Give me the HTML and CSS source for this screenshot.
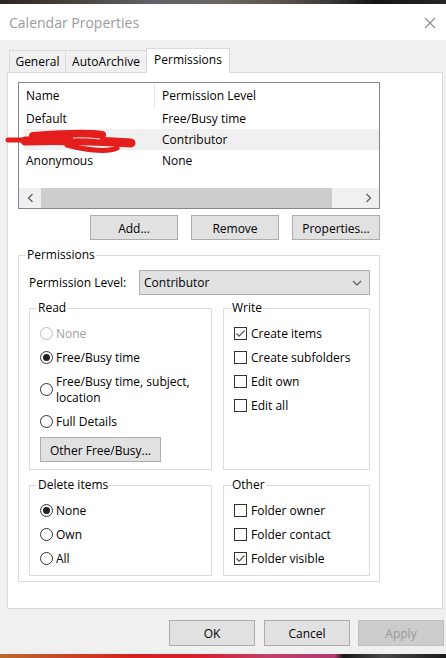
FILE: index.html
```html
<!DOCTYPE html>
<html lang="en">
  <head>
    <meta charset="utf-8" />
    <title>Calendar Properties</title>
    <link rel="stylesheet" href="styles.css">
  </head>
  <body>
    <div class="wall wall-top"></div>

    <div class="titlebar">
      <span class="title">Calendar Properties</span>
      <svg class="close" width="12" height="12" viewBox="0 0 12 12">
        <path d="M1 1 L11 11 M11 1 L1 11" stroke="#8a8a8a" stroke-width="1.1" fill="none"/>
      </svg>
    </div>

    <div class="dialog">
      <div class="tabs">
        <div class="tab tab-general">General</div>
        <div class="tab tab-archive">AutoArchive</div>
        <div class="tab tab-perms active">Permissions</div>
      </div>

      <div class="panel">
        <div class="list">
          <div class="list-head">
            <span class="col col-name">Name</span>
            <span class="col col-level">Permission Level</span>
          </div>
          <div class="list-row">
            <span class="col col-name">Default</span>
            <span class="col col-level">Free/Busy time</span>
          </div>
          <div class="list-row selected">
            <span class="col col-name"></span>
            <span class="col col-level">Contributor</span>
          </div>
          <div class="list-row">
            <span class="col col-name">Anonymous</span>
            <span class="col col-level">None</span>
          </div>
          <div class="list-fill"></div>
          <div class="hscroll">
            <span class="arrow">
              <svg width="7" height="10" viewBox="0 0 7 10"><path d="M5.5 1 L1.5 5 L5.5 9" stroke="#606060" stroke-width="1.3" fill="none"/></svg>
            </span>
            <span class="track"><span class="thumb"></span></span>
            <span class="arrow">
              <svg width="7" height="10" viewBox="0 0 7 10"><path d="M1.5 1 L5.5 5 L1.5 9" stroke="#606060" stroke-width="1.3" fill="none"/></svg>
            </span>
          </div>

          <!-- redaction scribble drawn over the user name -->
          <svg class="scribble" width="132" height="28" viewBox="0 0 132 28">
            <path d="M3 12 L24 12" stroke="#e41d1d" stroke-width="5" fill="none" stroke-linecap="round"/>
            <path d="M20 13 C50 12 90 13 126 15" stroke="#e41d1d" stroke-width="9" fill="none" stroke-linecap="round"/>
            <path d="M28 8 C55 6 85 5 97 7" stroke="#e41d1d" stroke-width="8" fill="none" stroke-linecap="round"/>
            <path d="M62 17 C84 23 104 24 112 20" stroke="#e41d1d" stroke-width="5" fill="none" stroke-linecap="round"/>
            <path d="M68 10 C77 9.5 86 10 95 11" stroke="#f4e6e6" stroke-width="1" fill="none"/>
          </svg>
        </div>

        <div class="list-buttons">
          <button class="btn btn-list">Add...</button>
          <button class="btn btn-list">Remove</button>
          <button class="btn btn-list">Properties...</button>
        </div>

        <fieldset class="group perms">
          <legend>Permissions</legend>
          <div class="level-row">
            <span class="level-label">Permission Level:</span>
            <div class="select">
              <span>Contributor</span>
              <svg width="10" height="6" viewBox="0 0 10 6"><path d="M1 1 L5 5 L9 1" stroke="#555" stroke-width="1.1" fill="none"/></svg>
            </div>
          </div>

          <div class="group-grid">
            <fieldset class="group read">
              <legend>Read</legend>
              <div class="opt disabled"><span class="radio"></span><span>None</span></div>
              <div class="opt"><span class="radio on"></span><span>Free/Busy time</span></div>
              <div class="opt tall"><span class="radio"></span><span>Free/Busy time, subject,<br>location</span></div>
              <div class="opt"><span class="radio"></span><span>Full Details</span></div>
              <button class="btn btn-other">Other Free/Busy...</button>
            </fieldset>

            <fieldset class="group write">
              <legend>Write</legend>
              <div class="opt"><span class="check on"><svg width="11" height="11" viewBox="0 0 11 11"><path d="M1.5 5.5 L4.2 8.2 L9.5 2.5" stroke="#555" stroke-width="1.2" fill="none"/></svg></span><span>Create items</span></div>
              <div class="opt"><span class="check"></span><span>Create subfolders</span></div>
              <div class="opt"><span class="check"></span><span>Edit own</span></div>
              <div class="opt"><span class="check"></span><span>Edit all</span></div>
            </fieldset>

            <fieldset class="group delete">
              <legend>Delete items</legend>
              <div class="opt"><span class="radio on"></span><span>None</span></div>
              <div class="opt"><span class="radio"></span><span>Own</span></div>
              <div class="opt"><span class="radio"></span><span>All</span></div>
            </fieldset>

            <fieldset class="group other">
              <legend>Other</legend>
              <div class="opt"><span class="check"></span><span>Folder owner</span></div>
              <div class="opt"><span class="check"></span><span>Folder contact</span></div>
              <div class="opt"><span class="check on"><svg width="11" height="11" viewBox="0 0 11 11"><path d="M1.5 5.5 L4.2 8.2 L9.5 2.5" stroke="#555" stroke-width="1.2" fill="none"/></svg></span><span>Folder visible</span></div>
            </fieldset>
          </div>
        </fieldset>
      </div>

      <div class="footer">
        <button class="btn btn-foot">OK</button>
        <button class="btn btn-foot">Cancel</button>
        <button class="btn btn-foot btn-disabled">Apply</button>
      </div>
    </div>

    <div class="wall wall-bottom"></div>
  </body>
</html>
```

FILE: styles.css
```css
body{
  margin: 0;
  width: 446px;
  height: 658px;
  overflow: hidden;
  font-family: "Open Sans", "Noto Sans", sans-serif;
  font-size: 12px;
  color: #000;
  background: #f0f0f0;
}
.wall{
  height: 4px;
}
.wall-top{
  background: linear-gradient(90deg, #2a2520 0%, #4a4640 18%, #62646a 35%, #6a6660 50%, #55504a 65%, #3a3838 74%, #141414 84%, #262626 100%);
}
.wall-bottom{
  background: linear-gradient(90deg, #b86a2a 0%, #c8452a 15%, #d8201e 30%, #d82030 45%, #c0406a 60%, #b03a70 75%, #1a1a1a 77%, #484848 86%, #1a1a1a 100%);
}

/* title bar */
.titlebar{
  height: 36px;
  background: #fff;
  display: flex;
  align-items: center;
  justify-content: space-between;
  padding: 0 10px 0 9px;
}
.title{
  font-size: 14px;
  color: #9a9a9a;
}
.close{
  margin-top: 1px;
}

/* dialog body */
.dialog{
  height: 614px;
  box-sizing: border-box;
  padding: 8px 2px 0 7px;
}
.tabs{
  display: flex;
  align-items: flex-end;
  height: 24px;
  padding-left: 2px;
  position: relative;
  z-index: 1;
}
.tab{
  box-sizing: border-box;
  height: 22px;
  line-height: 21px;
  text-align: center;
  border: 1px solid #d9d9d9;
  border-bottom: none;
  background: #f0f0f0;
  margin-left: -1px;
}
.tab:first-child{
  margin-left: 0;
}
.tab-general{ width: 57px; }
.tab-archive{ width: 82px; }
.tab-perms{ width: 84px; }
.tab.active{
  height: 25px;
  line-height: 22px;
  background: #fff;
  margin-bottom: -1px;
}

.panel{
  box-sizing: border-box;
  width: 436px;
  height: 537px;
  background: #fff;
  border: 1px solid #d9d9d9;
  padding: 9px 0 0 10px;
}

/* list view */
.list{
  position: relative;
  box-sizing: border-box;
  width: 362px;
  height: 127px;
  border: 1px solid #828790;
  display: flex;
  flex-direction: column;
}
.list-head, .list-row{
  display: flex;
  margin-left: 5px;
}
.list-head{
  height: 25px;
  line-height: 24px;
  padding-top: 1px;
  box-sizing: border-box;
}
.list-head .col-name{
  border-right: 1px solid #e5e5e5;
  height: 24px;
}
.list-row{
  height: 21px;
  line-height: 22px;
}
.list-row.selected{
  background: #f0f0f0;
}
.col-name{
  width: 128px;
  padding-left: 2px;
}
.col-level{
  padding-left: 7px;
}
.list-row .col-name{
  width: 129px;
}
.list-fill{
  flex: 1;
}
.hscroll{
  height: 20px;
  display: flex;
  background: #f0f0f0;
}
.arrow{
  width: 22px;
  display: flex;
  align-items: center;
  justify-content: center;
}
.track{
  flex: 1;
}
.thumb{
  display: block;
  width: 291px;
  height: 100%;
  background: #cdcdcd;
}
.scribble{
  position: absolute;
  left: -14px;
  top: 45px;
}

/* buttons */
.btn{
  box-sizing: border-box;
  font-family: inherit;
  font-size: 12px;
  color: #000;
  background: #e1e1e1;
  border: 1px solid #adadad;
  padding: 1px 0 0;
  margin: 0;
}
.list-buttons{
  width: 362px;
  display: flex;
  justify-content: flex-end;
  gap: 13px;
  margin-top: 6px;
}
.btn-list{
  width: 88px;
  height: 25px;
}

/* group boxes */
.group{
  margin: 0;
  min-width: 0;
  border: 1px solid #dcdcdc;
  padding: 0 9px 6px 10px;
}
.group legend{
  padding: 0 1px;
  margin-left: -3px;
  line-height: 16px;
}
.perms{
  width: 362px;
  box-sizing: border-box;
  margin-top: 7px;
  padding-top: 7px;
  padding-bottom: 5px;
}
.level-row{
  display: flex;
  align-items: center;
  height: 25px;
  line-height: 18px;
}
.level-label{
  width: 110px;
  padding-top: 1px;
}
.select{
  box-sizing: border-box;
  width: 231px;
  height: 25px;
  background: #e1e1e1;
  border: 1px solid #adadad;
  display: flex;
  align-items: center;
  justify-content: space-between;
  padding: 1px 7px 0 4px;
}
.group-grid{
  display: grid;
  grid-template-columns: 183px 147px;
  column-gap: 11px;
  row-gap: 7px;
  margin-top: 5px;
}
.read, .write, .delete, .other{
  padding: 5px 9px 5px 10px;
}
.read{
  padding-bottom: 7px;
}
.opt{
  display: flex;
  align-items: center;
  height: 24px;
  line-height: 16px;
}
.opt > span:last-child{
  padding-top: 1px;
}
.opt.tall{
  height: 40px;
}
.opt.disabled{
  color: #a0a0a0;
}
.radio{
  box-sizing: border-box;
  width: 13px;
  height: 13px;
  border: 1px solid #333;
  border-radius: 50%;
  margin-right: 3px;
  flex: none;
  display: flex;
  align-items: center;
  justify-content: center;
}
.opt.disabled .radio{
  border-color: #bcbcbc;
}
.radio.on::after{
  content: "";
  width: 7px;
  height: 7px;
  border-radius: 50%;
  background: #222;
}
.check{
  box-sizing: border-box;
  width: 13px;
  height: 13px;
  border: 1px solid #333;
  margin-right: 4px;
  flex: none;
  display: flex;
}
.btn-other{
  width: 121px;
  height: 25px;
  margin-top: 4px;
}

/* footer */
.footer{
  display: flex;
  justify-content: flex-end;
  margin-top: 11px;
}
.btn-foot{
  width: 86px;
  height: 26px;
  margin-left: 9px;
}
.btn-foot:last-child{
  margin-left: 8px;
}
.btn-disabled{
  background: #cccccc;
  border-color: #bfbfbf;
  color: #999;
}
```
